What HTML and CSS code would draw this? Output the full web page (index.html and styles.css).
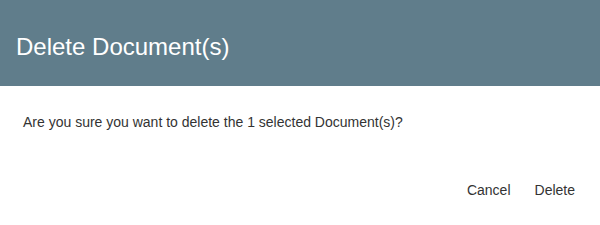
FILE: index.html
```html
<!DOCTYPE html>
<html>
<head>
<meta charset="utf-8">
<title>Delete Document(s)</title>
<link rel="stylesheet" href="styles.css">
</head>
<body>
<div class="dialog">
<div class="dialog-header">
<h1>Delete Document(s)</h1>
</div>
<div class="dialog-body">
<p>Are you sure you want to delete the 1 selected Document(s)?</p>
</div>
<div class="dialog-actions">
<a href="#" class="btn">Cancel</a>
<a href="#" class="btn">Delete</a>
</div>
</div>
</body>
</html>
```

FILE: styles.css
```css
html, body { margin: 0; padding: 0; background: #fff; }
body { font-family: "Liberation Sans", Arial, Helvetica, sans-serif; color: #333; }
.dialog { width: 600px; height: 225px; background: #fff; display: flex; flex-direction: column; }
.dialog-header { height: 86px; background: #607d8b; display: flex; align-items: center; padding: 0 16px; box-sizing: border-box; }
.dialog-header h1 { margin: 0; padding-top: 8px; font-size: 24px; font-weight: normal; color: #fff; }
.dialog-body { padding: 0 23px; flex: 1; }
.dialog-body p { margin: 28px 0 0 0; font-size: 14px; line-height: 16px; }
.dialog-actions { display: flex; justify-content: flex-end; padding: 0 15px 27px 0; gap: 4px; }
.btn { font-size: 14px; line-height: 16px; color: #333; text-decoration: none; padding: 0 10px; }
```
